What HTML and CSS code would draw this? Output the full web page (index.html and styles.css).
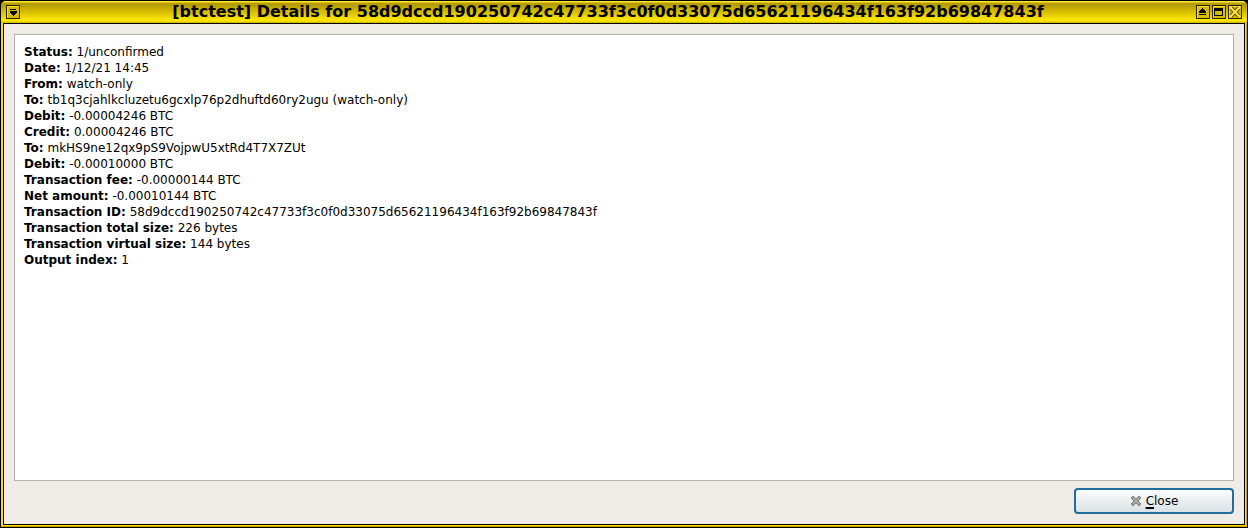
FILE: index.html
```html
<!DOCTYPE html>
<html lang="en">
<head>
    <meta charset="utf-8">
    <title>Transaction details</title>
    <link rel="stylesheet" href="styles.css">
</head>
<body>
    <div class="window">
        <header class="titlebar">
            <button type="button" class="win-button" aria-label="Window menu">
                <svg width="14" height="14" viewBox="0 0 14 14" shape-rendering="crispEdges">
                    <path d="M4 4h6v1h-6z M4 6h7v2h-1v1h-1v1h-1v1h-1v-1h-1v-1h-1v-1h-1z" fill="#000"/>
                </svg>
            </button>
            <h1 class="title">[btctest] Details for 58d9dccd190250742c47733f3c0f0d33075d65621196434f163f92b69847843f</h1>
            <div class="win-buttons">
                <button type="button" class="win-button" aria-label="Shade">
                    <svg width="14" height="14" viewBox="0 0 14 14" shape-rendering="crispEdges">
                        <path d="M6 3h1v1h1v1h1v1h1v2h-7v-2h1v-1h1v-1h1z M3 9h7v1h-7z" fill="#000"/>
                    </svg>
                </button>
                <button type="button" class="win-button" aria-label="Maximize">
                    <svg width="14" height="14" viewBox="0 0 14 14" shape-rendering="crispEdges">
                        <path d="M2 3h9v8h-9z M3 6v4h7v-4z" fill="#000" fill-rule="evenodd"/>
                    </svg>
                </button>
                <button type="button" class="win-button" aria-label="Close window">
                    <svg width="14" height="14" viewBox="0 0 14 14">
                        <path d="M3 3l8 8M11 3l-8 8" stroke="#5e5200" stroke-width="4"/>
                        <path d="M2 2l10 10M12 2l-10 10" stroke="#ffe636" stroke-width="2"/>
                    </svg>
                </button>
            </div>
        </header>

        <main class="content">
            <div class="details">
                <p><b>Status:</b> 1/unconfirmed</p>
                <p><b>Date:</b> 1/12/21 14:45</p>
                <p><b>From:</b> watch-only</p>
                <p><b>To:</b> tb1q3cjahlkcluzetu6gcxlp76p2dhuftd60ry2ugu (watch-only)</p>
                <p><b>Debit:</b> -0.00004246 BTC</p>
                <p><b>Credit:</b> 0.00004246 BTC</p>
                <p><b>To:</b> mkHS9ne12qx9pS9VojpwU5xtRd4T7X7ZUt</p>
                <p><b>Debit:</b> -0.00010000 BTC</p>
                <p><b>Transaction fee:</b> -0.00000144 BTC</p>
                <p><b>Net amount:</b> -0.00010144 BTC</p>
                <p><b>Transaction ID:</b> 58d9dccd190250742c47733f3c0f0d33075d65621196434f163f92b69847843f</p>
                <p><b>Transaction total size:</b> 226 bytes</p>
                <p><b>Transaction virtual size:</b> 144 bytes</p>
                <p><b>Output index:</b> 1</p>
            </div>
            <button type="button" class="close-button">
                <svg width="12" height="12" viewBox="0 0 12 12">
                    <path d="M1 3L3 1L6 4L9 1L11 3L8 6L11 9L9 11L6 8L3 11L1 9L4 6Z" fill="#a5a7a2" stroke="#7d7f7a" stroke-linejoin="round"/>
                </svg>
                <span><span class="mnemonic">C</span>lose</span>
            </button>
        </main>
    </div>
</body>
</html>
```
FILE: styles.css
```css
body {
    margin: 0;
    background: #000;
    color: #000;
    font-family: "DejaVu Sans", Verdana, sans-serif;
    font-size: 12px;
    line-height: 16px;
}

.window {
    box-sizing: border-box;
    display: flex;
    flex-direction: column;
    min-height: 100vh;
    padding: 0 2px 2px;
    border: 1px solid #000;
    border-radius: 6px 6px 0 0;
    background: #ffe000;
    box-shadow: inset 0 -1px #c8a800, inset -1px 0 #c8a800;
}

.titlebar {
    display: flex;
    align-items: center;
    height: 22px;
    padding: 0 5px;
    margin: 0 -2px;
    border-radius: 5px 5px 0 0;
    background: linear-gradient(#ffe930 0, #ffe930 1px, #b59c00 2px, #b59c00 4px, #ffe600 19px, #ffe600 20px, #c8ac00 22px);
}

.title {
    flex: 1;
    margin: 0;
    font-size: 16px;
    font-weight: bold;
    line-height: 20px;
    text-align: center;
    white-space: nowrap;
    overflow: hidden;
}

.win-buttons {
    display: flex;
    gap: 2px;
}

.win-button {
    box-sizing: border-box;
    width: 14px;
    height: 14px;
    padding: 0;
    border: 1px solid #2c2600;
    background: #d6bc00;
    box-shadow: inset 1px 1px #f5dc20;
}

.win-button svg {
    display: block;
    margin: -1px;
}

.content {
    flex: 1;
    display: flex;
    flex-direction: column;
    gap: 7px;
    padding: 10px;
    border: 1px solid #000;
    background: #efebe7;
}

.details {
    flex: 1;
    padding: 9px;
    border: 1px solid #b5b1ad;
    background: #fff;
}

.details p {
    margin: 0;
}

.close-button {
    box-sizing: border-box;
    display: flex;
    align-items: center;
    justify-content: center;
    align-self: flex-end;
    gap: 4px;
    width: 160px;
    height: 26px;
    padding: 0;
    border: 2px solid #236d9e;
    border-radius: 4px;
    background: linear-gradient(#fbfcfd, #dae2e5);
    color: #000;
    font: inherit;
}

.mnemonic {
    text-decoration: underline 2px;
    text-underline-offset: 2px;
}
```
